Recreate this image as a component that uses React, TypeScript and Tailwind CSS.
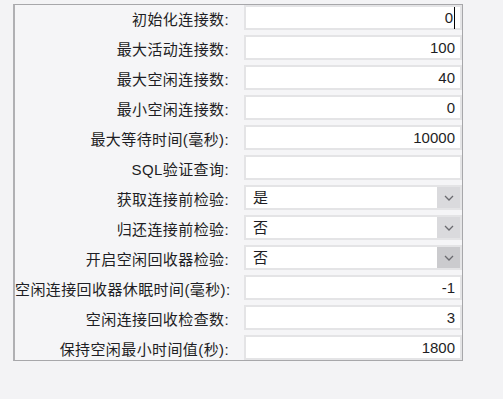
import React from 'react';

type Field =
  | { label: string; kind: 'text'; value: string; caret?: boolean }
  | { label: string; kind: 'select'; value: string; hot?: boolean };

const fields: Field[] = [
  { label: '初始化连接数:', kind: 'text', value: '0', caret: true },
  { label: '最大活动连接数:', kind: 'text', value: '100' },
  { label: '最大空闲连接数:', kind: 'text', value: '40' },
  { label: '最小空闲连接数:', kind: 'text', value: '0' },
  { label: '最大等待时间(毫秒):', kind: 'text', value: '10000' },
  { label: 'SQL验证查询:', kind: 'text', value: '' },
  { label: '获取连接前检验:', kind: 'select', value: '是' },
  { label: '归还连接前检验:', kind: 'select', value: '否' },
  { label: '开启空闲回收器检验:', kind: 'select', value: '否', hot: true },
  { label: '空闲连接回收器休眠时间(毫秒):', kind: 'text', value: '-1' },
  { label: '空闲连接回收检查数:', kind: 'text', value: '3' },
  { label: '保持空闲最小时间值(秒):', kind: 'text', value: '1800' },
];

const Chevron = () => (
  <svg width="10" height="6" viewBox="0 0 10 6" fill="none">
    <polyline points="1,1 5,5 9,1" stroke="#6b6b70" strokeWidth="1.3" />
  </svg>
);

const App = () => {
  return (
    <div
      className="w-[503px] h-[399px] bg-[#f3f3f5] pt-[4px] pl-[13px] text-[15px] text-[#1e1e24]"
      style={{ fontFamily: '"Liberation Sans", "Noto Sans CJK SC", sans-serif' }}
    >
      <div className="w-[450px] border border-[#a7a7aa] border-l-2 border-l-[#b0b0b3] bg-[#f5f5f7] flex flex-col gap-[5px]">
        {fields.map((f) => (
          <div key={f.label} className="flex items-center h-[25px]">
            <div className="w-[215px] pr-[1px] text-right whitespace-nowrap overflow-hidden leading-[25px] pt-[3px] tracking-[0.4px]">
              {f.label}
            </div>
            <div className="w-[14px]" />
            {f.kind === 'text' ? (
              <div className="w-[218px] h-[25px] bg-white border-2 border-[#e4e4e6] flex items-center justify-end pr-[5px]">
                <span className="leading-none">{f.value}</span>
                {f.caret && <span className="ml-[1px] w-[1px] h-[22px] bg-black" />}
              </div>
            ) : (
              <div className="w-[218px] h-[25px] bg-white border-2 border-[#e4e4e6] flex items-stretch">
                <span className="flex-1 pl-[7px] flex items-center pt-[1px]">{f.value}</span>
                <span
                  className={
                    f.hot
                      ? 'w-[23px] bg-[#cbcbce] flex items-center justify-center'
                      : 'w-[23px] bg-[#dadadd] flex items-center justify-center'
                  }
                >
                  <Chevron />
                </span>
              </div>
            )}
          </div>
        ))}
      </div>
    </div>
  );
};

export default App;
